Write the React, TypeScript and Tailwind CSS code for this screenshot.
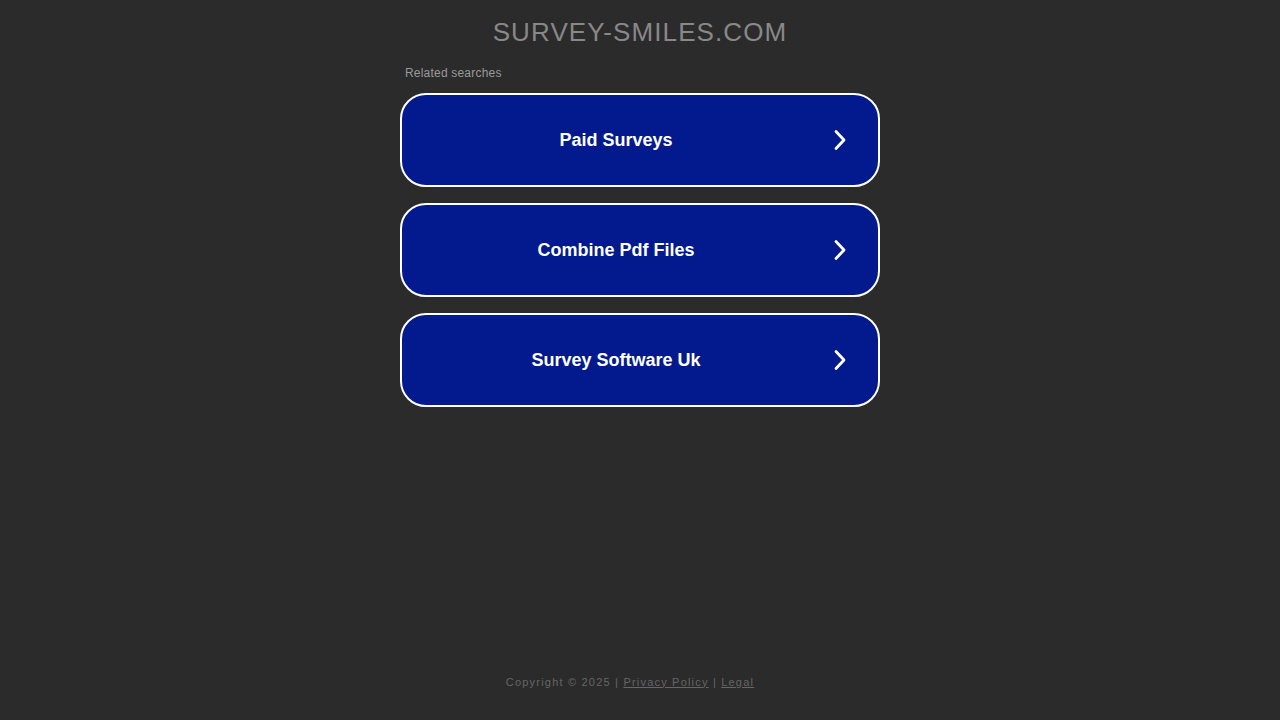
const searches = ["Paid Surveys", "Combine Pdf Files", "Survey Software Uk"];

function Chevron() {
  return (
    <svg width="16" height="22" viewBox="0 0 16 22" fill="none" className="shrink-0">
      <path d="M4 2.5 L12 11 L4 19.5" stroke="#fff" strokeWidth="2.8" strokeLinecap="round" strokeLinejoin="round" />
    </svg>
  );
}

export default function App() {
  return (
    <div className="flex min-h-[720px] flex-col items-center bg-[#2b2b2b] font-['Liberation_Sans',Arial,sans-serif]">
      <h1 className="mt-[15px] text-[26px] leading-[34px] tracking-[1.1px] text-[#888888]">SURVEY-SMILES.COM</h1>
      <div className="mt-[17px] w-[480px]">
        <p className="pl-[5px] text-[12px] leading-[14px] tracking-[0.2px] text-[#9a9a9a]">Related searches</p>
        <div className="mt-[13px] flex flex-col gap-[16px]">
          {searches.map((s) => (
            <a
              key={s}
              href="#"
              className="flex h-[94px] items-center rounded-[26px] border-2 border-white bg-[#021a8d] pr-[30px]"
            >
              <span className="flex-1 pr-[2px] text-center text-[18px] font-bold text-white">{s}</span>
              <Chevron />
            </a>
          ))}
        </div>
      </div>
      <div className="mt-auto mb-[30px] mr-[20px] text-[11px] tracking-[1.2px] text-[#666666]">
        Copyright © 2025 | <a href="#" className="underline">Privacy Policy</a> | <a href="#" className="underline">Legal</a>
      </div>
    </div>
  );
}
